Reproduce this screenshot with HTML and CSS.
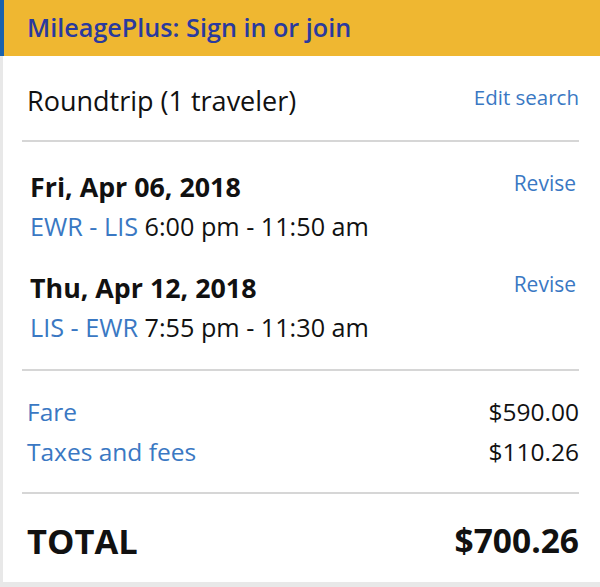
FILE: index.html
```html
<!DOCTYPE html>
<html>
<head>
<meta charset="utf-8">
<link rel="stylesheet" href="styles.css">
</head>
<body>
<div class="card">
  <div class="banner"><a class="banner-link">MileagePlus: Sign in or join</a></div>
  <div class="panel">
    <div class="row trip">
      <span class="trip-title">Roundtrip (1 traveler)</span>
      <a class="link small">Edit search</a>
    </div>
    <div class="divider"></div>
    <div class="flights">
      <div class="flight">
        <div class="flight-head">
          <span class="date">Fri, Apr 06, 2018</span>
          <a class="link small">Revise</a>
        </div>
        <div class="flight-line"><a class="link">EWR - LIS</a> 6:00 pm - 11:50 am</div>
      </div>
      <div class="flight">
        <div class="flight-head">
          <span class="date">Thu, Apr 12, 2018</span>
          <a class="link small">Revise</a>
        </div>
        <div class="flight-line"><a class="link">LIS - EWR</a> 7:55 pm - 11:30 am</div>
      </div>
    </div>
    <div class="divider"></div>
    <div class="prices">
      <div class="row price"><a class="link">Fare</a><span>$590.00</span></div>
      <div class="row price"><a class="link">Taxes and fees</a><span>$110.26</span></div>
    </div>
    <div class="divider"></div>
    <div class="row total"><span class="total-label">TOTAL</span><span>$700.26</span></div>
  </div>
</div>
</body>
</html>
```
FILE: styles.css
```css
html, body {
  margin: 0;
  padding: 0;
  background: #e8e8e8;
}
body {
  font-family: "Open Sans", "Liberation Sans", sans-serif;
  color: #111;
  width: 600px;
  height: 587px;
  overflow: hidden;
}
.card {
  display: flex;
  flex-direction: column;
  height: 582px;
}
.banner {
  height: 56px;
  background: #efb731;
  border-left: 4px solid #1b62ad;
  box-sizing: border-box;
  display: flex;
  align-items: center;
  padding-left: 23px;
  padding-bottom: 2px;
}
.banner-link {
  color: #2a3a9e;
  font-size: 25.2px;
  font-weight: 600;
}
.panel {
  flex: 1;
  background: #fff;
  margin-left: 3px;
  padding: 0 21px 0 19px;
  display: flex;
  flex-direction: column;
}
.row {
  display: flex;
  justify-content: space-between;
  align-items: center;
}
.link {
  color: #3a78c3;
}
.small {
  font-size: 21px;
  line-height: 24px;
}
.trip {
  height: 84px;
  box-sizing: border-box;
  padding: 29px 0 0 5px;
  align-items: flex-start;
}
.trip-title {
  font-size: 27px;
  line-height: 32px;
}
.trip .small {
  font-size: 20.5px;
}
.divider {
  height: 2px;
  background: #d6d6d6;
}
.flights {
  padding: 29px 3px 25px 8px;
}
.flight + .flight {
  margin-top: 29px;
}
.flight-head {
  display: flex;
  justify-content: space-between;
  align-items: flex-start;
}
.date {
  font-size: 26.8px;
  font-weight: 700;
  line-height: 32px;
}
.flight-line {
  font-size: 25.2px;
  line-height: 34px;
  margin-top: 6px;
}
.prices {
  padding: 21px 0 20px 5px;
}
.price {
  font-size: 24.5px;
  line-height: 40px;
}
.total {
  padding: 4px 0 0 5px;
  flex: 1;
  font-size: 33.5px;
  font-weight: 700;
}
.total-label {
  font-size: 34.5px;
}
```
